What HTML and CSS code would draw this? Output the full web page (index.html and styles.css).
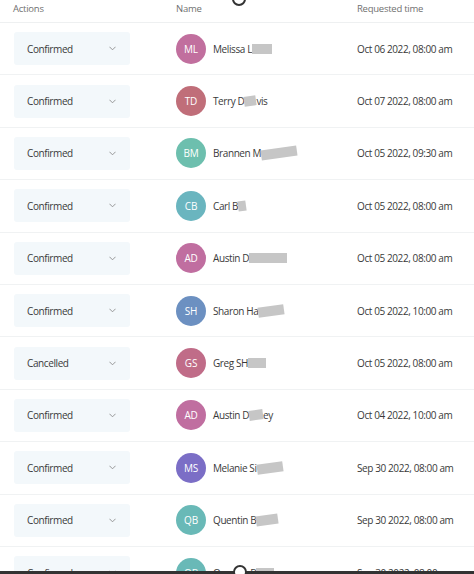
FILE: index.html
```html
<!DOCTYPE html>
<html>
<head>
<meta charset="utf-8">
<link rel="stylesheet" href="styles.css">
</head>
<body>
<div class="table">
  <div class="head">
    <div class="c1">Actions</div>
    <div class="c2">Name</div>
    <div class="c3">Requested time</div>
  </div>

  <div class="row">
    <div class="c1"><div class="select"><span>Confirmed</span><svg class="chev" viewBox="0 0 8 5"><path d="M0.5 0.5 L4 4 L7.5 0.5"/></svg></div></div>
    <div class="c2"><span class="av ml">ML</span><span class="nm">Melissa L</span><span class="blur" style="width:20px"></span></div>
    <div class="c3">Oct 06 2022, 08:00 am</div>
  </div>
  <div class="row">
    <div class="c1"><div class="select"><span>Confirmed</span><svg class="chev" viewBox="0 0 8 5"><path d="M0.5 0.5 L4 4 L7.5 0.5"/></svg></div></div>
    <div class="c2"><span class="av td">TD</span><span class="nm">Terry D</span><span class="blur tilt" style="width:12px"></span><span class="nm">vis</span></div>
    <div class="c3">Oct 07 2022, 08:00 am</div>
  </div>
  <div class="row">
    <div class="c1"><div class="select"><span>Confirmed</span><svg class="chev" viewBox="0 0 8 5"><path d="M0.5 0.5 L4 4 L7.5 0.5"/></svg></div></div>
    <div class="c2"><span class="av bm">BM</span><span class="nm">Brannen M</span><span class="blur tilt" style="width:36px"></span></div>
    <div class="c3">Oct 05 2022, 09:30 am</div>
  </div>
  <div class="row">
    <div class="c1"><div class="select"><span>Confirmed</span><svg class="chev" viewBox="0 0 8 5"><path d="M0.5 0.5 L4 4 L7.5 0.5"/></svg></div></div>
    <div class="c2"><span class="av cb">CB</span><span class="nm">Carl B</span><span class="blur tilt" style="width:8px"></span></div>
    <div class="c3">Oct 05 2022, 08:00 am</div>
  </div>
  <div class="row">
    <div class="c1"><div class="select"><span>Confirmed</span><svg class="chev" viewBox="0 0 8 5"><path d="M0.5 0.5 L4 4 L7.5 0.5"/></svg></div></div>
    <div class="c2"><span class="av ad">AD</span><span class="nm">Austin D</span><span class="blur" style="width:38px"></span></div>
    <div class="c3">Oct 05 2022, 08:00 am</div>
  </div>
  <div class="row">
    <div class="c1"><div class="select"><span>Confirmed</span><svg class="chev" viewBox="0 0 8 5"><path d="M0.5 0.5 L4 4 L7.5 0.5"/></svg></div></div>
    <div class="c2"><span class="av sh">SH</span><span class="nm">Sharon Ha</span><span class="blur tilt" style="width:26px"></span></div>
    <div class="c3">Oct 05 2022, 10:00 am</div>
  </div>
  <div class="row">
    <div class="c1"><div class="select"><span>Cancelled</span><svg class="chev" viewBox="0 0 8 5"><path d="M0.5 0.5 L4 4 L7.5 0.5"/></svg></div></div>
    <div class="c2"><span class="av gs">GS</span><span class="nm">Greg SH</span><span class="blur" style="width:18px"></span></div>
    <div class="c3">Oct 05 2022, 08:00 am</div>
  </div>
  <div class="row">
    <div class="c1"><div class="select"><span>Confirmed</span><svg class="chev" viewBox="0 0 8 5"><path d="M0.5 0.5 L4 4 L7.5 0.5"/></svg></div></div>
    <div class="c2"><span class="av ad">AD</span><span class="nm">Austin D</span><span class="blur tilt" style="width:14px"></span><span class="nm">ey</span></div>
    <div class="c3">Oct 04 2022, 10:00 am</div>
  </div>
  <div class="row">
    <div class="c1"><div class="select"><span>Confirmed</span><svg class="chev" viewBox="0 0 8 5"><path d="M0.5 0.5 L4 4 L7.5 0.5"/></svg></div></div>
    <div class="c2"><span class="av ms">MS</span><span class="nm">Melanie Si</span><span class="blur tilt" style="width:26px"></span></div>
    <div class="c3">Sep 30 2022, 08:00 am</div>
  </div>
  <div class="row">
    <div class="c1"><div class="select"><span>Confirmed</span><svg class="chev" viewBox="0 0 8 5"><path d="M0.5 0.5 L4 4 L7.5 0.5"/></svg></div></div>
    <div class="c2"><span class="av qb">QB</span><span class="nm">Quentin B</span><span class="blur tilt" style="width:22px"></span></div>
    <div class="c3">Sep 30 2022, 08:00 am</div>
  </div>
  <div class="row">
    <div class="c1"><div class="select"><span>Confirmed</span><svg class="chev" viewBox="0 0 8 5"><path d="M0.5 0.5 L4 4 L7.5 0.5"/></svg></div></div>
    <div class="c2"><span class="av qb">QB</span><span class="nm">Quentin B</span><span class="blur" style="width:18px"></span></div>
    <div class="c3">Sep 30 2022, 08:00 am</div>
  </div>
</div>
<div class="cursor-top"></div>
<div class="bottom-bar"></div>
<div class="cursor-bottom"></div>
</body>
</html>
```
FILE: styles.css
```css
html, body {
  margin: 0;
  padding: 0;
  background: #ffffff;
  overflow: hidden;
  height: 574px;
}
body {
  font-family: "Open Sans", "Noto Sans", sans-serif;
  color: #3a3a3a;
  font-size: 10px;
  letter-spacing: -0.4px;
  position: relative;
}
.table {
  display: flex;
  flex-direction: column;
}
.head, .row {
  display: grid;
  grid-template-columns: 176px 181px 1fr;
  align-items: center;
}
.head {
  height: 23px;
  box-sizing: border-box;
  border-bottom: 1px solid #eef0f1;
  color: #707070;
  font-size: 9.5px;
  letter-spacing: -0.25px;
  padding-bottom: 6px;
}
.head .c1 { padding-left: 13px; }
.row {
  height: 52.4px;
  box-sizing: border-box;
  border-bottom: 1px solid #f0f2f3;
}
.row .c1 { padding-left: 14px; }
.select {
  width: 116px;
  height: 33px;
  background: #f3f8fb;
  border-radius: 3px;
  display: flex;
  align-items: center;
  justify-content: space-between;
  padding: 0 13px;
  box-sizing: border-box;
  color: #3a3a3a;
}
.chev {
  width: 7px;
  height: 5px;
  fill: none;
  stroke: #8a8a8a;
  stroke-width: 1;
  margin-right: 1px;
}
.c2 {
  display: flex;
  align-items: center;
}
.av {
  width: 30px;
  height: 30px;
  border-radius: 50%;
  color: #fff;
  display: flex;
  align-items: center;
  justify-content: center;
  font-size: 10px;
  letter-spacing: -0.2px;
  margin-right: 7px;
  flex: none;
}
.nm { white-space: nowrap; }
.blur {
  display: inline-block;
  height: 10px;
  background: #c6c6c6;
  flex: none;
}
.tilt { transform: rotate(-8deg); }
.ml { background: #c16f9e; }
.td { background: #c06e79; }
.bm { background: #6dbfae; }
.cb { background: #6ab5bf; }
.ad { background: #c06ea0; }
.sh { background: #6c90c1; }
.gs { background: #c06c88; }
.ms { background: #7b6ec6; }
.qb { background: #69b9b7; }
.c3 { white-space: nowrap; }
.cursor-top {
  position: absolute;
  left: 232px;
  top: -8px;
  width: 10px;
  height: 10px;
  border: 2px solid #333;
  border-radius: 50%;
}
.bottom-bar {
  position: absolute;
  left: 0;
  right: 0;
  top: 571px;
  height: 3px;
  background: #333;
}
.cursor-bottom {
  position: absolute;
  left: 233px;
  top: 565px;
  width: 10px;
  height: 10px;
  border: 2px solid #333;
  border-radius: 50%;
  background: #fff;
}
```
